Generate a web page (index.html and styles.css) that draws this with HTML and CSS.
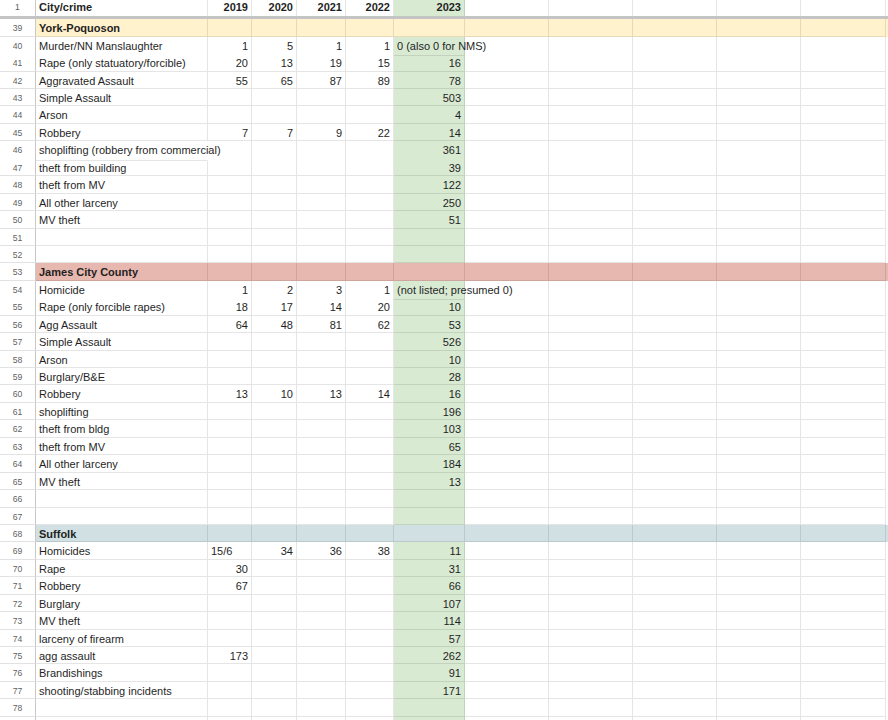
FILE: index.html
```html
<!DOCTYPE html>
<html lang="en">
<head>
<meta charset="utf-8">
<title>City/crime</title>
<link rel="stylesheet" href="styles.css">
</head>
<body>
<div class="sheet">
  <div class="row head">
    <div class="rn">1</div><div class="c t b">City/crime</div><div class="c n b">2019</div><div class="c n b">2020</div><div class="c n b">2021</div><div class="c n b">2022</div><div class="c n b g">2023</div><div class="c"></div><div class="c"></div><div class="c"></div><div class="c"></div><div class="c"></div>
  </div>
  <div class="freeze"></div>

  <div class="row sec sec-y">
    <div class="rn">39</div><div class="c t b">York-Poquoson</div><div class="c"></div><div class="c"></div><div class="c"></div><div class="c"></div><div class="c"></div><div class="c"></div><div class="c"></div><div class="c"></div><div class="c"></div><div class="c"></div>
  </div>
  <div class="row">
    <div class="rn">40</div><div class="c t">Murder/NN Manslaughter</div><div class="c n">1</div><div class="c n">5</div><div class="c n">1</div><div class="c n">1</div><div class="c t g ovf">0 (also 0 for NMS)</div><div class="c"></div><div class="c"></div><div class="c"></div><div class="c"></div><div class="c"></div>
  </div>
  <div class="row">
    <div class="rn">41</div><div class="c t">Rape (only statuatory/forcible)</div><div class="c n">20</div><div class="c n">13</div><div class="c n">19</div><div class="c n">15</div><div class="c n g">16</div><div class="c"></div><div class="c"></div><div class="c"></div><div class="c"></div><div class="c"></div>
  </div>
  <div class="row">
    <div class="rn">42</div><div class="c t">Aggravated Assault</div><div class="c n">55</div><div class="c n">65</div><div class="c n">87</div><div class="c n">89</div><div class="c n g">78</div><div class="c"></div><div class="c"></div><div class="c"></div><div class="c"></div><div class="c"></div>
  </div>
  <div class="row">
    <div class="rn">43</div><div class="c t">Simple Assault</div><div class="c"></div><div class="c"></div><div class="c"></div><div class="c"></div><div class="c n g">503</div><div class="c"></div><div class="c"></div><div class="c"></div><div class="c"></div><div class="c"></div>
  </div>
  <div class="row">
    <div class="rn">44</div><div class="c t">Arson</div><div class="c"></div><div class="c"></div><div class="c"></div><div class="c"></div><div class="c n g">4</div><div class="c"></div><div class="c"></div><div class="c"></div><div class="c"></div><div class="c"></div>
  </div>
  <div class="row">
    <div class="rn">45</div><div class="c t">Robbery</div><div class="c n">7</div><div class="c n">7</div><div class="c n">9</div><div class="c n">22</div><div class="c n g">14</div><div class="c"></div><div class="c"></div><div class="c"></div><div class="c"></div><div class="c"></div>
  </div>
  <div class="row">
    <div class="rn">46</div><div class="c t ovf ovf-a">shoplifting (robbery from commercial)</div><div class="c"></div><div class="c"></div><div class="c"></div><div class="c"></div><div class="c n g">361</div><div class="c"></div><div class="c"></div><div class="c"></div><div class="c"></div><div class="c"></div>
  </div>
  <div class="row">
    <div class="rn">47</div><div class="c t">theft from building</div><div class="c"></div><div class="c"></div><div class="c"></div><div class="c"></div><div class="c n g">39</div><div class="c"></div><div class="c"></div><div class="c"></div><div class="c"></div><div class="c"></div>
  </div>
  <div class="row">
    <div class="rn">48</div><div class="c t">theft from MV</div><div class="c"></div><div class="c"></div><div class="c"></div><div class="c"></div><div class="c n g">122</div><div class="c"></div><div class="c"></div><div class="c"></div><div class="c"></div><div class="c"></div>
  </div>
  <div class="row">
    <div class="rn">49</div><div class="c t">All other larceny</div><div class="c"></div><div class="c"></div><div class="c"></div><div class="c"></div><div class="c n g">250</div><div class="c"></div><div class="c"></div><div class="c"></div><div class="c"></div><div class="c"></div>
  </div>
  <div class="row">
    <div class="rn">50</div><div class="c t">MV theft</div><div class="c"></div><div class="c"></div><div class="c"></div><div class="c"></div><div class="c n g">51</div><div class="c"></div><div class="c"></div><div class="c"></div><div class="c"></div><div class="c"></div>
  </div>
  <div class="row">
    <div class="rn">51</div><div class="c"></div><div class="c"></div><div class="c"></div><div class="c"></div><div class="c"></div><div class="c g"></div><div class="c"></div><div class="c"></div><div class="c"></div><div class="c"></div><div class="c"></div>
  </div>
  <div class="row">
    <div class="rn">52</div><div class="c"></div><div class="c"></div><div class="c"></div><div class="c"></div><div class="c"></div><div class="c g"></div><div class="c"></div><div class="c"></div><div class="c"></div><div class="c"></div><div class="c"></div>
  </div>

  <div class="row sec sec-r">
    <div class="rn">53</div><div class="c t b">James City County</div><div class="c"></div><div class="c"></div><div class="c"></div><div class="c"></div><div class="c"></div><div class="c"></div><div class="c"></div><div class="c"></div><div class="c"></div><div class="c"></div>
  </div>
  <div class="row">
    <div class="rn">54</div><div class="c t">Homicide</div><div class="c n">1</div><div class="c n">2</div><div class="c n">3</div><div class="c n">1</div><div class="c t g ovf">(not listed; presumed 0)</div><div class="c"></div><div class="c"></div><div class="c"></div><div class="c"></div><div class="c"></div>
  </div>
  <div class="row">
    <div class="rn">55</div><div class="c t">Rape (only forcible rapes)</div><div class="c n">18</div><div class="c n">17</div><div class="c n">14</div><div class="c n">20</div><div class="c n g">10</div><div class="c"></div><div class="c"></div><div class="c"></div><div class="c"></div><div class="c"></div>
  </div>
  <div class="row">
    <div class="rn">56</div><div class="c t">Agg Assault</div><div class="c n">64</div><div class="c n">48</div><div class="c n">81</div><div class="c n">62</div><div class="c n g">53</div><div class="c"></div><div class="c"></div><div class="c"></div><div class="c"></div><div class="c"></div>
  </div>
  <div class="row">
    <div class="rn">57</div><div class="c t">Simple Assault</div><div class="c"></div><div class="c"></div><div class="c"></div><div class="c"></div><div class="c n g">526</div><div class="c"></div><div class="c"></div><div class="c"></div><div class="c"></div><div class="c"></div>
  </div>
  <div class="row">
    <div class="rn">58</div><div class="c t">Arson</div><div class="c"></div><div class="c"></div><div class="c"></div><div class="c"></div><div class="c n g">10</div><div class="c"></div><div class="c"></div><div class="c"></div><div class="c"></div><div class="c"></div>
  </div>
  <div class="row">
    <div class="rn">59</div><div class="c t">Burglary/B&amp;E</div><div class="c"></div><div class="c"></div><div class="c"></div><div class="c"></div><div class="c n g">28</div><div class="c"></div><div class="c"></div><div class="c"></div><div class="c"></div><div class="c"></div>
  </div>
  <div class="row">
    <div class="rn">60</div><div class="c t">Robbery</div><div class="c n">13</div><div class="c n">10</div><div class="c n">13</div><div class="c n">14</div><div class="c n g">16</div><div class="c"></div><div class="c"></div><div class="c"></div><div class="c"></div><div class="c"></div>
  </div>
  <div class="row">
    <div class="rn">61</div><div class="c t">shoplifting</div><div class="c"></div><div class="c"></div><div class="c"></div><div class="c"></div><div class="c n g">196</div><div class="c"></div><div class="c"></div><div class="c"></div><div class="c"></div><div class="c"></div>
  </div>
  <div class="row">
    <div class="rn">62</div><div class="c t">theft from bldg</div><div class="c"></div><div class="c"></div><div class="c"></div><div class="c"></div><div class="c n g">103</div><div class="c"></div><div class="c"></div><div class="c"></div><div class="c"></div><div class="c"></div>
  </div>
  <div class="row">
    <div class="rn">63</div><div class="c t">theft from MV</div><div class="c"></div><div class="c"></div><div class="c"></div><div class="c"></div><div class="c n g">65</div><div class="c"></div><div class="c"></div><div class="c"></div><div class="c"></div><div class="c"></div>
  </div>
  <div class="row">
    <div class="rn">64</div><div class="c t">All other larceny</div><div class="c"></div><div class="c"></div><div class="c"></div><div class="c"></div><div class="c n g">184</div><div class="c"></div><div class="c"></div><div class="c"></div><div class="c"></div><div class="c"></div>
  </div>
  <div class="row">
    <div class="rn">65</div><div class="c t">MV theft</div><div class="c"></div><div class="c"></div><div class="c"></div><div class="c"></div><div class="c n g">13</div><div class="c"></div><div class="c"></div><div class="c"></div><div class="c"></div><div class="c"></div>
  </div>
  <div class="row">
    <div class="rn">66</div><div class="c"></div><div class="c"></div><div class="c"></div><div class="c"></div><div class="c"></div><div class="c g"></div><div class="c"></div><div class="c"></div><div class="c"></div><div class="c"></div><div class="c"></div>
  </div>
  <div class="row">
    <div class="rn">67</div><div class="c"></div><div class="c"></div><div class="c"></div><div class="c"></div><div class="c"></div><div class="c g"></div><div class="c"></div><div class="c"></div><div class="c"></div><div class="c"></div><div class="c"></div>
  </div>

  <div class="row sec sec-b">
    <div class="rn">68</div><div class="c t b">Suffolk</div><div class="c"></div><div class="c"></div><div class="c"></div><div class="c"></div><div class="c"></div><div class="c"></div><div class="c"></div><div class="c"></div><div class="c"></div><div class="c"></div>
  </div>
  <div class="row">
    <div class="rn">69</div><div class="c t">Homicides</div><div class="c t">15/6</div><div class="c n">34</div><div class="c n">36</div><div class="c n">38</div><div class="c n g">11</div><div class="c"></div><div class="c"></div><div class="c"></div><div class="c"></div><div class="c"></div>
  </div>
  <div class="row">
    <div class="rn">70</div><div class="c t">Rape</div><div class="c n">30</div><div class="c"></div><div class="c"></div><div class="c"></div><div class="c n g">31</div><div class="c"></div><div class="c"></div><div class="c"></div><div class="c"></div><div class="c"></div>
  </div>
  <div class="row">
    <div class="rn">71</div><div class="c t">Robbery</div><div class="c n">67</div><div class="c"></div><div class="c"></div><div class="c"></div><div class="c n g">66</div><div class="c"></div><div class="c"></div><div class="c"></div><div class="c"></div><div class="c"></div>
  </div>
  <div class="row">
    <div class="rn">72</div><div class="c t">Burglary</div><div class="c"></div><div class="c"></div><div class="c"></div><div class="c"></div><div class="c n g">107</div><div class="c"></div><div class="c"></div><div class="c"></div><div class="c"></div><div class="c"></div>
  </div>
  <div class="row">
    <div class="rn">73</div><div class="c t">MV theft</div><div class="c"></div><div class="c"></div><div class="c"></div><div class="c"></div><div class="c n g">114</div><div class="c"></div><div class="c"></div><div class="c"></div><div class="c"></div><div class="c"></div>
  </div>
  <div class="row">
    <div class="rn">74</div><div class="c t">larceny of firearm</div><div class="c"></div><div class="c"></div><div class="c"></div><div class="c"></div><div class="c n g">57</div><div class="c"></div><div class="c"></div><div class="c"></div><div class="c"></div><div class="c"></div>
  </div>
  <div class="row">
    <div class="rn">75</div><div class="c t">agg assault</div><div class="c n">173</div><div class="c"></div><div class="c"></div><div class="c"></div><div class="c n g">262</div><div class="c"></div><div class="c"></div><div class="c"></div><div class="c"></div><div class="c"></div>
  </div>
  <div class="row">
    <div class="rn">76</div><div class="c t">Brandishings</div><div class="c"></div><div class="c"></div><div class="c"></div><div class="c"></div><div class="c n g">91</div><div class="c"></div><div class="c"></div><div class="c"></div><div class="c"></div><div class="c"></div>
  </div>
  <div class="row">
    <div class="rn">77</div><div class="c t">shooting/stabbing incidents</div><div class="c"></div><div class="c"></div><div class="c"></div><div class="c"></div><div class="c n g">171</div><div class="c"></div><div class="c"></div><div class="c"></div><div class="c"></div><div class="c"></div>
  </div>
  <div class="row">
    <div class="rn">78</div><div class="c"></div><div class="c"></div><div class="c"></div><div class="c"></div><div class="c"></div><div class="c g"></div><div class="c"></div><div class="c"></div><div class="c"></div><div class="c"></div><div class="c"></div>
  </div>
  <div class="row">
    <div class="rn"></div><div class="c"></div><div class="c"></div><div class="c"></div><div class="c"></div><div class="c"></div><div class="c g"></div><div class="c"></div><div class="c"></div><div class="c"></div><div class="c"></div><div class="c"></div>
  </div>
</div>
</body>
</html>
```

FILE: styles.css
```css
html, body {
  margin: 0;
  padding: 0;
  background: #ffffff;
}

body {
  width: 888px;
  height: 720px;
  overflow: hidden;
  font-family: "Liberation Sans", Arial, sans-serif;
  color: #1f1f1f;
}

.sheet {
  display: flex;
  flex-direction: column;
  width: 900px;
}

.row {
  display: grid;
  grid-template-columns: 36px 172px 44px 45px 49px 48px 71px 84px 84px 84px 84px 85px;
  height: 17.44px;
  flex: none;
}

.row.head {
  height: 15.5px;
}

.freeze {
  height: 3.8px;
  flex: none;
  background: #c4c4c4;
}

.rn {
  box-sizing: border-box;
  border-right: 1px solid #c8c8c8;
  border-bottom: 1px solid #e2e2e2;
  background: #ffffff;
  color: #5f5f5f;
  font-size: 8.6px;
  line-height: 17.44px;
  padding-top: 1px;
  text-align: center;
  overflow: hidden;
}

.head .rn {
  line-height: 15.5px;
  padding-top: 0;
  border-bottom: none;
}

.c {
  box-sizing: border-box;
  border-right: 1px solid rgba(0, 0, 0, 0.1);
  border-bottom: 1px solid rgba(0, 0, 0, 0.1);
  font-size: 11px;
  line-height: 17.44px;
  padding-top: 1px;
  white-space: nowrap;
  overflow: hidden;
  background: #ffffff;
}

.head .c {
  line-height: 15.5px;
  padding-top: 0;
  border-bottom: none;
}

.t {
  text-align: left;
  padding-left: 3px;
}

.n {
  text-align: right;
  padding-right: 3px;
}

.b {
  font-weight: bold;
}

.g {
  background: #d9ead3;
}

.ovf {
  overflow: visible;
  z-index: 1;
}

.ovf-a {
  border-right-color: transparent;
}

.sec .c {
  background: transparent;
}

.sec-y {
  background: #fff2cc;
}

.sec-r {
  background: #e6b8af;
}

.sec-b {
  background: #d0e0e3;
}
```
